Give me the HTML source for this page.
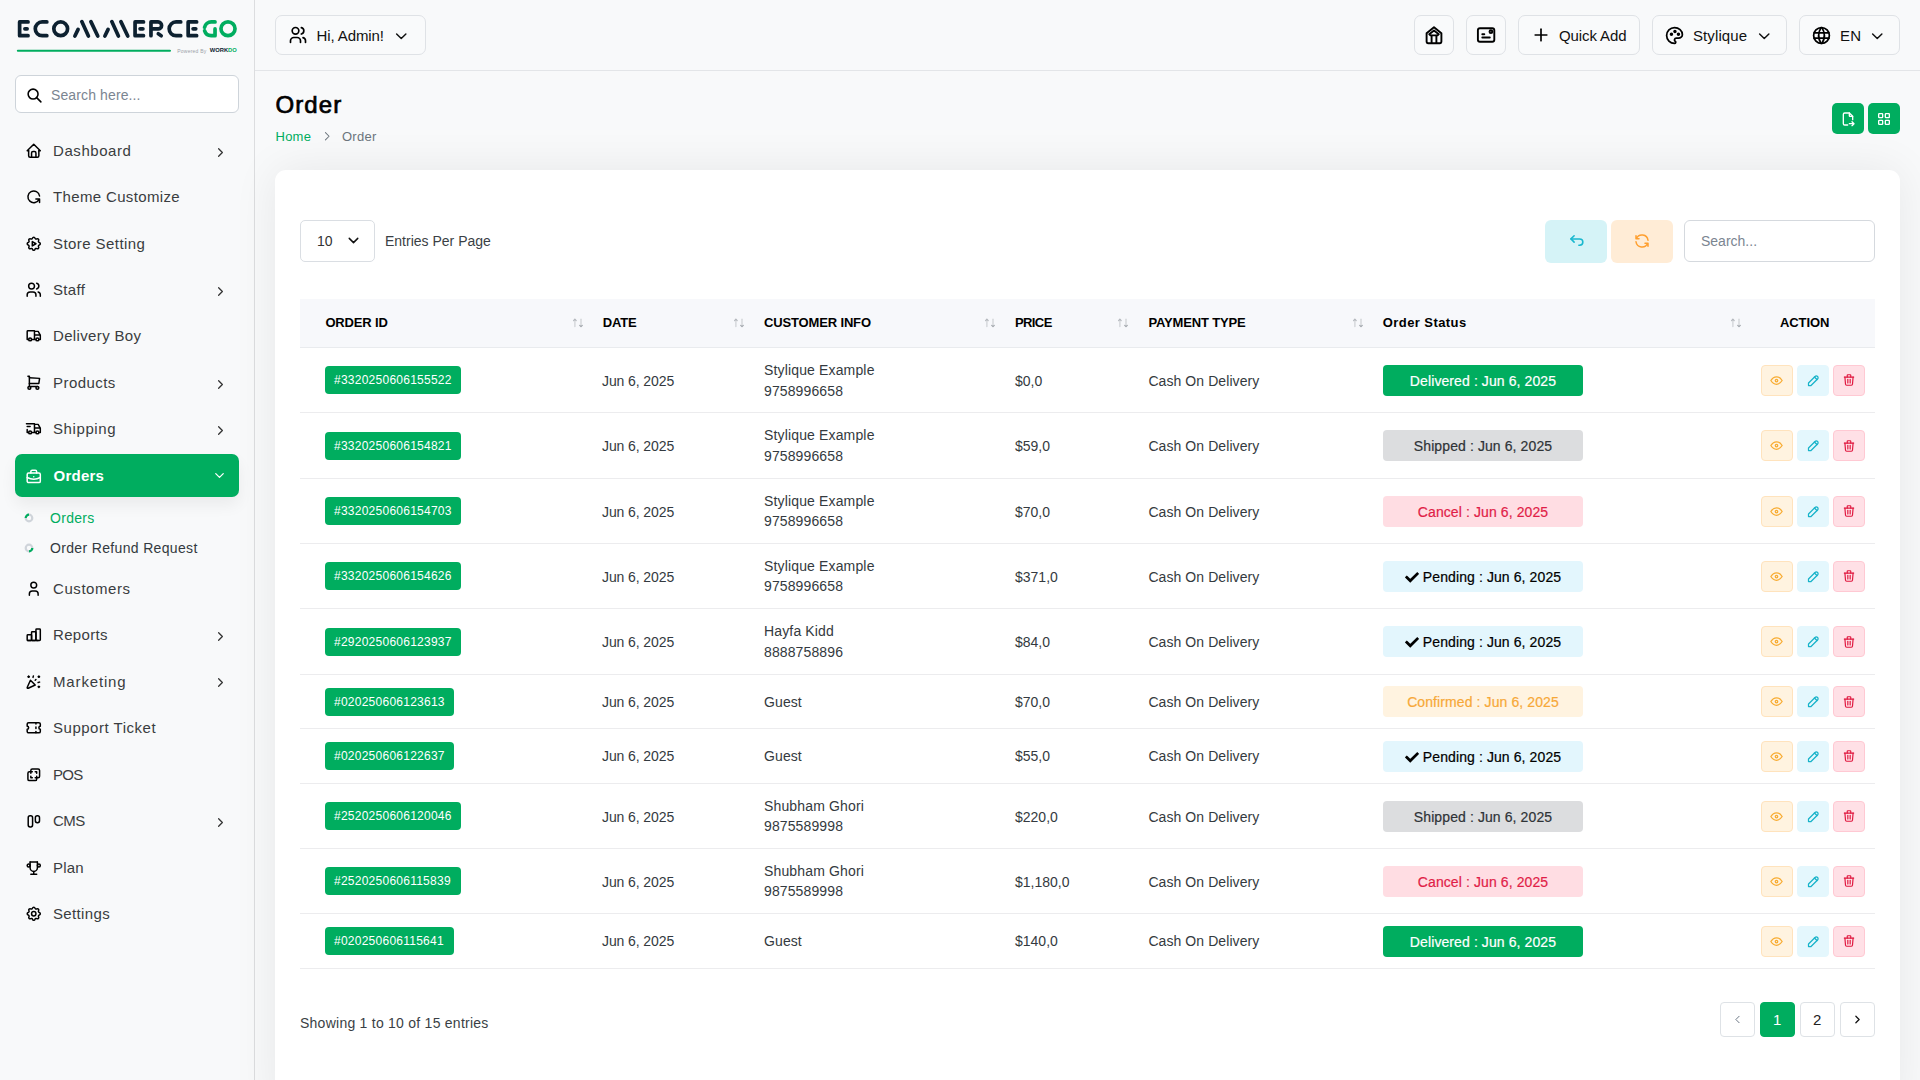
<!DOCTYPE html>
<html lang="en"><head><meta charset="utf-8"><title>Order</title><style>
*{box-sizing:border-box;margin:0;padding:0}
html,body{width:1920px;height:1080px;overflow:hidden}
body{font-family:"Liberation Sans",sans-serif;background:#f8f9fa;position:relative}
#sidebar{position:absolute;left:0;top:0;width:255px;height:1080px;background:#f8f9fa;border-right:1px solid #dcdddf}
.t{position:absolute;white-space:nowrap;line-height:20px;height:20px}
.box{position:absolute}
.ic{position:absolute;overflow:visible}
</style></head>
<body>
<div id="sidebar"></div>
<svg style="position:absolute;left:0;top:0;width:254px;height:60px" viewBox="0 0 254 60"><g stroke="#0d2130" stroke-width="3.7" fill="none" stroke-linecap="round" stroke-linejoin="round"><path d="M28.05 21.93H19.62V35.7H28.05"/><path d="M24.9 28.8H27.1"/><path d="M46.83 21.93H42.15A6.88 6.88 0 0 0 42.15 35.7H46.83"/><circle cx="60.7" cy="28.8" r="6.88"/><path d="M74.9 36L78.1 29.4M81.8 21.6L88.4 36M90.9 21.6L97.75 36"/><path d="M104.9 36L108.1 29.4M111.8 21.6L118.4 36M120.9 21.6L127.75 36"/><path d="M143.5 21.93H135.07V35.7H143.5"/><path d="M140.07 28.8H142.9"/><path d="M150.97 35.7V21.93H158.1A3.48 3.48 0 0 1 158.1 28.9H150.97"/><path d="M158.3 33.8L161.2 35.7"/><path d="M180.73 21.93H176.05A6.88 6.88 0 0 0 176.05 35.7H180.73"/><path d="M196.63 21.93H188.17V35.7H196.63"/><path d="M193.07 28.8H195.73"/></g><g stroke="#00ad5f" stroke-width="3.7" fill="none" stroke-linecap="round" stroke-linejoin="round"><path d="M215.03 21.93H211.35A6.88 6.88 0 0 0 204.55 27.3"/><path d="M204.6 30.8A6.88 6.88 0 0 0 211.35 35.7H215.03V28.9"/><ellipse cx="228" cy="28.8" rx="7.03" ry="6.88"/><path d="M17.9 50.75H169.9" stroke-width="2.2"/></g><text x="177.3" y="52.8" font-size="5" fill="#9ba1a8" font-family="Liberation Sans" textLength="29" lengthAdjust="spacing">Powered By</text><text x="209.8" y="52.2" font-size="5.8" font-weight="700" fill="#0d2130" font-family="Liberation Sans" textLength="27" lengthAdjust="spacingAndGlyphs">WORK<tspan fill="#00ad5f">DO</tspan></text></svg>
<div class="box" style="left:15px;top:75px;width:224px;height:38px;background:#fff;border:1px solid #ced4da;border-radius:6px"></div>
<svg class="ic" style="left:26px;top:87px;width:17px;height:17px;" viewBox="0 0 24 24" fill="none" stroke="#000" stroke-width="2.2" stroke-linecap="round" stroke-linejoin="round"><path d="M10 10m-7 0a7 7 0 1 0 14 0a7 7 0 1 0 -14 0"/><path d="M21 21l-6 -6"/></svg>
<div class="t" style="left:51px;top:84.95px;font-size:14px;font-weight:400;color:#7b8591;letter-spacing:0.12px;">Search here...</div>
<svg class="ic" style="left:25.35px;top:141.8px;width:17.5px;height:17.5px;" viewBox="0 0 24 24" fill="none" stroke="#000" stroke-width="2.05" stroke-linecap="round" stroke-linejoin="round"><path d="M5 12l-2 0l9 -9l9 9l-2 0"/><path d="M5 12v7a2 2 0 0 0 2 2h10a2 2 0 0 0 2 -2v-7"/><path d="M9 21v-6a2 2 0 0 1 2 -2h2a2 2 0 0 1 2 2v6"/></svg>
<div class="t" style="left:53px;top:140.95px;font-size:15px;font-weight:400;color:#3a3d40;letter-spacing:0.57px;">Dashboard</div>
<svg class="ic" style="left:213px;top:144.70000000000002px;width:15px;height:15px;" viewBox="0 0 24 24" fill="none" stroke="#333" stroke-width="2" stroke-linecap="round" stroke-linejoin="round"><path d="M9 6l6 6l-6 6"/></svg>
<svg class="ic" style="left:25.35px;top:188.1px;width:17.5px;height:17.5px;" viewBox="0 0 24 24" fill="none" stroke="#000" stroke-width="2.05" stroke-linecap="round" stroke-linejoin="round"><path d="M19.95 11a8 8 0 1 0 -.5 4m.5 5v-5h-5"/></svg>
<div class="t" style="left:53px;top:187.25px;font-size:15px;font-weight:400;color:#3a3d40;letter-spacing:0.35px;">Theme Customize</div>
<svg class="ic" style="left:25.35px;top:234.5px;width:17.5px;height:17.5px;" viewBox="0 0 24 24" fill="none" stroke="#000" stroke-width="2.05" stroke-linecap="round" stroke-linejoin="round"><path d="M10.325 4.317c.426 -1.756 2.924 -1.756 3.35 0a1.724 1.724 0 0 0 2.573 1.066c1.543 -.94 3.31 .826 2.37 2.37a1.724 1.724 0 0 0 1.065 2.572c1.756 .426 1.756 2.924 0 3.35a1.724 1.724 0 0 0 -1.066 2.573c.94 1.543 -.826 3.31 -2.37 2.37a1.724 1.724 0 0 0 -2.572 1.065c-.426 1.756 -2.924 1.756 -3.35 0a1.724 1.724 0 0 0 -2.573 -1.066c-1.543 .94 -3.31 -.826 -2.37 -2.37a1.724 1.724 0 0 0 -1.065 -2.572c-1.756 -.426 -1.756 -2.924 0 -3.35a1.724 1.724 0 0 0 1.066 -2.573c-.94 -1.543 .826 -3.31 2.37 -2.37c1 .608 2.296 .07 2.572 -1.065z"/><path d="M10 9v6l5 -3z"/></svg>
<div class="t" style="left:53px;top:233.65px;font-size:15px;font-weight:400;color:#3a3d40;letter-spacing:0.43px;">Store Setting</div>
<svg class="ic" style="left:25.35px;top:280.9px;width:17.5px;height:17.5px;" viewBox="0 0 24 24" fill="none" stroke="#000" stroke-width="2.05" stroke-linecap="round" stroke-linejoin="round"><path d="M9 7m-4 0a4 4 0 1 0 8 0a4 4 0 1 0 -8 0"/><path d="M3 21v-2a4 4 0 0 1 4 -4h4a4 4 0 0 1 4 4v2"/><path d="M16 3.13a4 4 0 0 1 0 7.75"/><path d="M21 21v-2a4 4 0 0 0 -3 -3.85"/></svg>
<div class="t" style="left:53px;top:280.05px;font-size:15px;font-weight:400;color:#3a3d40;letter-spacing:0.35px;">Staff</div>
<svg class="ic" style="left:213px;top:283.79999999999995px;width:15px;height:15px;" viewBox="0 0 24 24" fill="none" stroke="#333" stroke-width="2" stroke-linecap="round" stroke-linejoin="round"><path d="M9 6l6 6l-6 6"/></svg>
<svg class="ic" style="left:25.35px;top:327.2px;width:17.5px;height:17.5px;" viewBox="0 0 24 24" fill="none" stroke="#000" stroke-width="2.05" stroke-linecap="round" stroke-linejoin="round"><path d="M7 17m-2 0a2 2 0 1 0 4 0a2 2 0 1 0 -4 0"/><path d="M17 17m-2 0a2 2 0 1 0 4 0a2 2 0 1 0 -4 0"/><path d="M5 17h-2v-11a1 1 0 0 1 1 -1h9v12m-4 0h6m4 0h2v-6h-8m0 -5h5l3 5"/></svg>
<div class="t" style="left:53px;top:326.35px;font-size:15px;font-weight:400;color:#3a3d40;letter-spacing:0.35px;">Delivery Boy</div>
<svg class="ic" style="left:25.35px;top:373.6px;width:17.5px;height:17.5px;" viewBox="0 0 24 24" fill="none" stroke="#000" stroke-width="2.05" stroke-linecap="round" stroke-linejoin="round"><path d="M6 19m-2 0a2 2 0 1 0 4 0a2 2 0 1 0 -4 0"/><path d="M17 19m-2 0a2 2 0 1 0 4 0a2 2 0 1 0 -4 0"/><path d="M17 17h-11v-14h-2"/><path d="M6 5l14 1l-1 7h-13"/></svg>
<div class="t" style="left:53px;top:372.75px;font-size:15px;font-weight:400;color:#3a3d40;letter-spacing:0.45px;">Products</div>
<svg class="ic" style="left:213px;top:376.5px;width:15px;height:15px;" viewBox="0 0 24 24" fill="none" stroke="#333" stroke-width="2" stroke-linecap="round" stroke-linejoin="round"><path d="M9 6l6 6l-6 6"/></svg>
<svg class="ic" style="left:25.35px;top:419.9px;width:17.5px;height:17.5px;" viewBox="0 0 24 24" fill="none" stroke="#000" stroke-width="2.05" stroke-linecap="round" stroke-linejoin="round"><path d="M7 17m-2 0a2 2 0 1 0 4 0a2 2 0 1 0 -4 0"/><path d="M17 17m-2 0a2 2 0 1 0 4 0a2 2 0 1 0 -4 0"/><path d="M5 17h-2v-4m-1 -8h11v12m-4 0h6m4 0h2v-6h-8m0 -5h5l3 5"/><path d="M3 9l4 0"/></svg>
<div class="t" style="left:53px;top:419.05px;font-size:15px;font-weight:400;color:#3a3d40;letter-spacing:0.6px;">Shipping</div>
<svg class="ic" style="left:213px;top:422.79999999999995px;width:15px;height:15px;" viewBox="0 0 24 24" fill="none" stroke="#333" stroke-width="2" stroke-linecap="round" stroke-linejoin="round"><path d="M9 6l6 6l-6 6"/></svg>
<svg class="ic" style="left:25.35px;top:579.8px;width:17.5px;height:17.5px;" viewBox="0 0 24 24" fill="none" stroke="#000" stroke-width="2.05" stroke-linecap="round" stroke-linejoin="round"><path d="M8 7a4 4 0 1 0 8 0a4 4 0 0 0 -8 0"/><path d="M6 21v-2a4 4 0 0 1 4 -4h4a4 4 0 0 1 4 4v2"/></svg>
<div class="t" style="left:53px;top:578.95px;font-size:15px;font-weight:400;color:#3a3d40;letter-spacing:0.57px;">Customers</div>
<svg class="ic" style="left:25.35px;top:626.2px;width:17.5px;height:17.5px;" viewBox="0 0 24 24" fill="none" stroke="#000" stroke-width="2.05" stroke-linecap="round" stroke-linejoin="round"><path d="M3 13a1 1 0 0 1 1 -1h4a1 1 0 0 1 1 1v6a1 1 0 0 1 -1 1h-4a1 1 0 0 1 -1 -1z"/><path d="M9 9a1 1 0 0 1 1 -1h4a1 1 0 0 1 1 1v10a1 1 0 0 1 -1 1h-4a1 1 0 0 1 -1 -1z"/><path d="M15 5a1 1 0 0 1 1 -1h4a1 1 0 0 1 1 1v14a1 1 0 0 1 -1 1h-4a1 1 0 0 1 -1 -1z"/><path d="M4 20h14"/></svg>
<div class="t" style="left:53px;top:625.35px;font-size:15px;font-weight:400;color:#3a3d40;letter-spacing:0.35px;">Reports</div>
<svg class="ic" style="left:213px;top:629.1px;width:15px;height:15px;" viewBox="0 0 24 24" fill="none" stroke="#333" stroke-width="2" stroke-linecap="round" stroke-linejoin="round"><path d="M9 6l6 6l-6 6"/></svg>
<svg class="ic" style="left:25.35px;top:672.5px;width:17.5px;height:17.5px;" viewBox="0 0 24 24" fill="none" stroke="#000" stroke-width="2.05" stroke-linecap="round" stroke-linejoin="round"><path d="M4 5h2"/><path d="M5 4v2"/><path d="M11.5 4l-.5 2"/><path d="M18 5h2"/><path d="M19 4v2"/><path d="M15 9l-1 1"/><path d="M18 13l2 -.5"/><path d="M18 19h2"/><path d="M19 18v2"/><path d="M14 16.518l-6.518 -6.518l-4.39 9.58a1 1 0 0 0 1.329 1.329l9.579 -4.39z"/></svg>
<div class="t" style="left:53px;top:671.65px;font-size:15px;font-weight:400;color:#3a3d40;letter-spacing:0.85px;">Marketing</div>
<svg class="ic" style="left:213px;top:675.4px;width:15px;height:15px;" viewBox="0 0 24 24" fill="none" stroke="#333" stroke-width="2" stroke-linecap="round" stroke-linejoin="round"><path d="M9 6l6 6l-6 6"/></svg>
<svg class="ic" style="left:25.35px;top:719.0px;width:17.5px;height:17.5px;" viewBox="0 0 24 24" fill="none" stroke="#000" stroke-width="2.05" stroke-linecap="round" stroke-linejoin="round"><path d="M15 5l0 2"/><path d="M15 11l0 2"/><path d="M15 17l0 2"/><path d="M5 5h14a2 2 0 0 1 2 2v3a2 2 0 0 0 0 4v3a2 2 0 0 1 -2 2h-14a2 2 0 0 1 -2 -2v-3a2 2 0 0 0 0 -4v-3a2 2 0 0 1 2 -2"/></svg>
<div class="t" style="left:53px;top:718.15px;font-size:15px;font-weight:400;color:#3a3d40;letter-spacing:0.52px;">Support Ticket</div>
<svg class="ic" style="left:25.35px;top:765.8px;width:17.5px;height:17.5px;" viewBox="0 0 24 24" fill="none" stroke="#000" stroke-width="2.05" stroke-linecap="round" stroke-linejoin="round"><path d="M16 16v2a2 2 0 0 1 -2 2h-8a2 2 0 0 1 -2 -2v-8a2 2 0 0 1 2 -2h2v-2a2 2 0 0 1 2 -2h8a2 2 0 0 1 2 2v8a2 2 0 0 1 -2 2h-2"/><path d="M10 8l-2 0l0 2"/><path d="M8 14l0 2l2 0"/><path d="M14 8l2 0l0 2"/><path d="M16 14l0 2l-2 0"/></svg>
<div class="t" style="left:53px;top:764.95px;font-size:15px;font-weight:400;color:#3a3d40;letter-spacing:-0.75px;">POS</div>
<svg class="ic" style="left:25.35px;top:812.1px;width:17.5px;height:17.5px;" viewBox="0 0 24 24" fill="none" stroke="#000" stroke-width="2.05" stroke-linecap="round" stroke-linejoin="round"><rect x="4.4" y="5.2" width="6" height="15.3" rx="2.6"/><rect x="14.2" y="5.2" width="5.7" height="9.4" rx="2.6"/></svg>
<div class="t" style="left:53px;top:811.25px;font-size:15px;font-weight:400;color:#3a3d40;letter-spacing:-0.55px;">CMS</div>
<svg class="ic" style="left:213px;top:815.0px;width:15px;height:15px;" viewBox="0 0 24 24" fill="none" stroke="#333" stroke-width="2" stroke-linecap="round" stroke-linejoin="round"><path d="M9 6l6 6l-6 6"/></svg>
<svg class="ic" style="left:25.35px;top:858.6px;width:17.5px;height:17.5px;" viewBox="0 0 24 24" fill="none" stroke="#000" stroke-width="2.05" stroke-linecap="round" stroke-linejoin="round"><path d="M8 21l8 0"/><path d="M12 17l0 4"/><path d="M7 4l10 0"/><path d="M17 4v8a5 5 0 0 1 -10 0v-8"/><path d="M5 9m-2 0a2 2 0 1 0 4 0a2 2 0 1 0 -4 0"/><path d="M19 9m-2 0a2 2 0 1 0 4 0a2 2 0 1 0 -4 0"/></svg>
<div class="t" style="left:53px;top:857.75px;font-size:15px;font-weight:400;color:#3a3d40;letter-spacing:0.15px;">Plan</div>
<svg class="ic" style="left:25.35px;top:904.8px;width:17.5px;height:17.5px;" viewBox="0 0 24 24" fill="none" stroke="#000" stroke-width="2.05" stroke-linecap="round" stroke-linejoin="round"><path d="M10.325 4.317c.426 -1.756 2.924 -1.756 3.35 0a1.724 1.724 0 0 0 2.573 1.066c1.543 -.94 3.31 .826 2.37 2.37a1.724 1.724 0 0 0 1.065 2.572c1.756 .426 1.756 2.924 0 3.35a1.724 1.724 0 0 0 -1.066 2.573c.94 1.543 -.826 3.31 -2.37 2.37a1.724 1.724 0 0 0 -2.572 1.065c-.426 1.756 -2.924 1.756 -3.35 0a1.724 1.724 0 0 0 -2.573 -1.066c-1.543 .94 -3.31 -.826 -2.37 -2.37a1.724 1.724 0 0 0 -1.065 -2.572c-1.756 -.426 -1.756 -2.924 0 -3.35a1.724 1.724 0 0 0 1.066 -2.573c-.94 -1.543 .826 -3.31 2.37 -2.37c1 .608 2.296 .07 2.572 -1.065z"/><path d="M9 12a3 3 0 1 0 6 0a3 3 0 0 0 -6 0"/></svg>
<div class="t" style="left:53px;top:903.95px;font-size:15px;font-weight:400;color:#3a3d40;letter-spacing:0.35px;">Settings</div>
<div class="box" style="left:15px;top:454px;width:224px;height:43px;background:#00ad5f;border-radius:7px;box-shadow:0 8px 16px rgba(0,0,0,0.06)"></div>
<svg class="ic" style="left:25.3px;top:468px;width:17.5px;height:17.5px;" viewBox="0 0 24 24" fill="none" stroke="#fff" stroke-width="2.05" stroke-linecap="round" stroke-linejoin="round"><path d="M3 7m0 2a2 2 0 0 1 2 -2h14a2 2 0 0 1 2 2v9a2 2 0 0 1 -2 2h-14a2 2 0 0 1 -2 -2z"/><path d="M8 7v-2a2 2 0 0 1 2 -2h4a2 2 0 0 1 2 2v2"/><path d="M12 12l0 .01"/><path d="M3 13a20 20 0 0 0 18 0"/></svg>
<div class="t" style="left:53.5px;top:466.15px;font-size:15px;font-weight:700;color:#fff;letter-spacing:0.25px;">Orders</div>
<svg class="ic" style="left:211.5px;top:467.5px;width:15px;height:15px;" viewBox="0 0 24 24" fill="none" stroke="#fff" stroke-width="2" stroke-linecap="round" stroke-linejoin="round"><path d="M6 9l6 6l6 -6"/></svg>
<svg class="ic" style="left:24px;top:513px;width:10px;height:10px" viewBox="0 0 10 10"><circle cx="5" cy="5" r="3.3" fill="none" stroke="#cfd4da" stroke-width="2.2"/><path d="M1.7 5A3.3 3.3 0 0 1 5 1.7" fill="none" stroke="#00ad5f" stroke-width="2.2"/></svg>
<div class="t" style="left:50px;top:508.05px;font-size:14px;font-weight:400;color:#00ad5f;letter-spacing:0.3px;">Orders</div>
<svg class="ic" style="left:24px;top:543px;width:10px;height:10px" viewBox="0 0 10 10"><circle cx="5" cy="5" r="3.3" fill="none" stroke="#cfd4da" stroke-width="2.2"/><path d="M8.3 5A3.3 3.3 0 0 1 5 8.3" fill="none" stroke="#00ad5f" stroke-width="2.2"/></svg>
<div class="t" style="left:50px;top:538.05px;font-size:14px;font-weight:400;color:#333a40;letter-spacing:0.34px;">Order Refund Request</div>
<div class="box" style="left:255px;top:70px;width:1665px;height:1px;background:#e3e5e8"></div>
<div class="box" style="left:275px;top:15px;width:151px;height:40px;border:1px solid #dfe2e6;border-radius:7px;background:#f9fafb"></div>
<svg class="ic" style="left:287.5px;top:25px;width:20px;height:20px;" viewBox="0 0 24 24" fill="none" stroke="#000" stroke-width="2" stroke-linecap="round" stroke-linejoin="round"><path d="M9 7m-4 0a4 4 0 1 0 8 0a4 4 0 1 0 -8 0"/><path d="M3 21v-2a4 4 0 0 1 4 -4h4a4 4 0 0 1 4 4v2"/><path d="M16 3.13a4 4 0 0 1 0 7.75"/><path d="M21 21v-2a4 4 0 0 0 -3 -3.85"/></svg>
<div class="t" style="left:316.5px;top:25.95px;font-size:15px;font-weight:400;color:#111;letter-spacing:-0.1px;">Hi, Admin!</div>
<svg class="ic" style="left:392px;top:26.5px;width:18.5px;height:18.5px;" viewBox="0 0 24 24" fill="none" stroke="#111" stroke-width="1.9" stroke-linecap="round" stroke-linejoin="round"><path d="M6 9l6 6l6 -6"/></svg>
<div class="box" style="left:1414px;top:15px;width:40px;height:40px;border:1px solid #dfe2e6;border-radius:7px;background:#f9fafb"></div>
<svg class="ic" style="left:1414px;top:15px;width:40px;height:40px" viewBox="0 0 40 40" fill="none" stroke="#000" stroke-width="1.9" stroke-linecap="round" stroke-linejoin="round"><path d="M12.6 18.2L20 12.2L27.4 18.2V26.6A1.6 1.6 0 0 1 25.8 28.2H14.2A1.6 1.6 0 0 1 12.6 26.6Z"/><path d="M15.2 19.2L20 15.4L24.8 19.2L23.6 20.4H16.4Z"/><path d="M17.6 20.6V28M22.4 20.6V28"/></svg>
<div class="box" style="left:1466px;top:15px;width:40px;height:40px;border:1px solid #dfe2e6;border-radius:7px;background:#f9fafb"></div>
<svg class="ic" style="left:1466px;top:15px;width:40px;height:40px" viewBox="0 0 40 40" fill="none" stroke="#000" stroke-width="1.9" stroke-linecap="round" stroke-linejoin="round"><rect x="11.9" y="13.3" width="16.4" height="13.5" rx="2"/><circle cx="24.9" cy="16.7" r="1.4"/><path d="M16.3 19.2H18.3M16.3 22.5H23.8"/></svg>
<div class="box" style="left:1518px;top:15px;width:122px;height:40px;border:1px solid #dfe2e6;border-radius:7px;background:#f9fafb"></div>
<svg class="ic" style="left:1531px;top:25px;width:20px;height:20px;" viewBox="0 0 24 24" fill="none" stroke="#000" stroke-width="2" stroke-linecap="round" stroke-linejoin="round"><path d="M12 5l0 14"/><path d="M5 12l14 0"/></svg>
<div class="t" style="left:1559px;top:25.95px;font-size:15px;font-weight:400;color:#111;letter-spacing:-0.1px;">Quick Add</div>
<div class="box" style="left:1652px;top:15px;width:135px;height:40px;border:1px solid #dfe2e6;border-radius:7px;background:#f9fafb"></div>
<svg class="ic" style="left:1664px;top:25px;width:21px;height:21px;" viewBox="0 0 24 24" fill="none" stroke="#000" stroke-width="2" stroke-linecap="round" stroke-linejoin="round"><path d="M12 21a9 9 0 0 1 0 -18c4.97 0 9 3.582 9 8c0 1.06 -.474 2.078 -1.318 2.828c-.844 .75 -1.989 1.172 -3.182 1.172h-2.5a2 2 0 0 0 -1 3.75a1.3 1.3 0 0 1 -1 2.25"/><path d="M8.5 10.5m-1 0a1 1 0 1 0 2 0a1 1 0 1 0 -2 0"/><path d="M12.5 7.5m-1 0a1 1 0 1 0 2 0a1 1 0 1 0 -2 0"/><path d="M16.5 10.5m-1 0a1 1 0 1 0 2 0a1 1 0 1 0 -2 0"/></svg>
<div class="t" style="left:1693px;top:25.95px;font-size:15px;font-weight:400;color:#111;letter-spacing:0.1px;">Stylique</div>
<svg class="ic" style="left:1755px;top:26.5px;width:18.5px;height:18.5px;" viewBox="0 0 24 24" fill="none" stroke="#111" stroke-width="1.9" stroke-linecap="round" stroke-linejoin="round"><path d="M6 9l6 6l6 -6"/></svg>
<div class="box" style="left:1799px;top:15px;width:101px;height:40px;border:1px solid #dfe2e6;border-radius:7px;background:#f9fafb"></div>
<svg class="ic" style="left:1811px;top:25px;width:21px;height:21px;" viewBox="0 0 24 24" fill="none" stroke="#000" stroke-width="2" stroke-linecap="round" stroke-linejoin="round"><path d="M3 12a9 9 0 1 0 18 0a9 9 0 0 0 -18 0"/><path d="M3.6 9h16.8"/><path d="M3.6 15h16.8"/><path d="M11.5 3a17 17 0 0 0 0 18"/><path d="M12.5 3a17 17 0 0 1 0 18"/></svg>
<div class="t" style="left:1840px;top:25.95px;font-size:15px;font-weight:400;color:#111;letter-spacing:0.2px;">EN</div>
<svg class="ic" style="left:1868px;top:26.5px;width:18.5px;height:18.5px;" viewBox="0 0 24 24" fill="none" stroke="#111" stroke-width="1.9" stroke-linecap="round" stroke-linejoin="round"><path d="M6 9l6 6l6 -6"/></svg>
<div class="t" style="left:275.5px;top:95.35px;font-size:24px;font-weight:400;color:#000;letter-spacing:1.1px;-webkit-text-stroke:0.7px #000">Order</div>
<div class="t" style="left:275.5px;top:126.65px;font-size:13px;font-weight:400;color:#00ad5f;letter-spacing:0.25px;">Home</div>
<svg class="ic" style="left:319.5px;top:129px;width:14.5px;height:14.5px;" viewBox="0 0 24 24" fill="none" stroke="#6c757d" stroke-width="1.7" stroke-linecap="round" stroke-linejoin="round"><path d="M9 6l6 6l-6 6"/></svg>
<div class="t" style="left:342px;top:126.65px;font-size:13px;font-weight:400;color:#6c757d;letter-spacing:0.25px;">Order</div>
<div class="box" style="left:1832px;top:103px;width:32px;height:31px;background:#00ad5f;border-radius:5px"></div>
<svg class="ic" style="left:1840px;top:110.5px;width:16px;height:16px;" viewBox="0 0 24 24" fill="none" stroke="#fff" stroke-width="2" stroke-linecap="round" stroke-linejoin="round"><path d="M14 3v4a1 1 0 0 0 1 1h4"/><path d="M11.5 21h-4.5a2 2 0 0 1 -2 -2v-14a2 2 0 0 1 2 -2h7l5 5v5m-5 6h7m-3 -3l3 3l-3 3"/></svg>
<div class="box" style="left:1868px;top:103px;width:32px;height:31px;background:#00ad5f;border-radius:5px"></div>
<svg class="ic" style="left:1876px;top:110.5px;width:16px;height:16px;" viewBox="0 0 24 24" fill="none" stroke="#fff" stroke-width="2" stroke-linecap="round" stroke-linejoin="round"><path d="M4 4m0 1a1 1 0 0 1 1 -1h4a1 1 0 0 1 1 1v4a1 1 0 0 1 -1 1h-4a1 1 0 0 1 -1 -1z"/><path d="M14 4m0 1a1 1 0 0 1 1 -1h4a1 1 0 0 1 1 1v4a1 1 0 0 1 -1 1h-4a1 1 0 0 1 -1 -1z"/><path d="M4 14m0 1a1 1 0 0 1 1 -1h4a1 1 0 0 1 1 1v4a1 1 0 0 1 -1 1h-4a1 1 0 0 1 -1 -1z"/><path d="M14 14m0 1a1 1 0 0 1 1 -1h4a1 1 0 0 1 1 1v4a1 1 0 0 1 -1 1h-4a1 1 0 0 1 -1 -1z"/></svg>
<div class="box" style="left:275px;top:170px;width:1625px;height:940px;background:#fff;border-radius:11px;box-shadow:0 0 45px rgba(0,0,0,0.075)"></div>
<div class="box" style="left:300px;top:220px;width:75px;height:42px;border:1px solid #dadee3;border-radius:5px;background:#fff"></div>
<div class="t" style="left:317px;top:231.15px;font-size:14px;font-weight:400;color:#333;letter-spacing:0px;">10</div>
<svg class="ic" style="left:344.5px;top:232px;width:17px;height:17px;" viewBox="0 0 24 24" fill="none" stroke="#111" stroke-width="2.1" stroke-linecap="round" stroke-linejoin="round"><path d="M6 9l6 6l6 -6"/></svg>
<div class="t" style="left:385px;top:231.15px;font-size:14px;font-weight:400;color:#3a3f45;letter-spacing:0px;">Entries Per Page</div>
<div class="box" style="left:1545px;top:220px;width:62px;height:43px;background:#d5f3f7;border-radius:6px"></div>
<svg class="ic" style="left:1567px;top:231px;width:19px;height:19px;" viewBox="0 0 24 24" fill="none" stroke="#1ab8cf" stroke-width="2" stroke-linecap="round" stroke-linejoin="round"><path d="M9 14l-4 -4l4 -4"/><path d="M5 10h11a4 4 0 1 1 0 8h-1"/></svg>
<div class="box" style="left:1611px;top:220px;width:62px;height:43px;background:#ffecd6;border-radius:6px"></div>
<svg class="ic" style="left:1633px;top:231.5px;width:18px;height:18px;" viewBox="0 0 24 24" fill="none" stroke="#ff9f2f" stroke-width="2" stroke-linecap="round" stroke-linejoin="round"><path d="M20 11a8.1 8.1 0 0 0 -15.5 -2m-.5 -4v4h4"/><path d="M4 13a8.1 8.1 0 0 0 15.5 2m.5 4v-4h-4"/></svg>
<div class="box" style="left:1684px;top:220px;width:191px;height:42px;border:1px solid #d5d9de;border-radius:6px;background:#fff"></div>
<div class="t" style="left:1701px;top:231.15px;font-size:14px;font-weight:400;color:#7b8591;letter-spacing:0px;">Search...</div>
<div class="box" style="left:300px;top:299px;width:1575px;height:49px;background:#f7f8fb;border-bottom:1px solid #e9ebee"></div>
<div class="t" style="left:325.4px;top:312.65px;font-size:13px;font-weight:700;color:#000;letter-spacing:-0.15px;">ORDER ID</div>
<svg class="ic" style="left:571.5px;top:316px;width:12px;height:12px" viewBox="0 0 12 12" fill="none" stroke-width="1.2" stroke-linecap="round" stroke-linejoin="round"><path d="M2.9 10.6V3.4" stroke="#cdd0d4"/><path d="M1.6 4.6L2.9 3.2L4.2 4.6" stroke="#b4b8bd"/><path d="M9 3.2V10.4" stroke="#cdd0d4"/><path d="M7.7 9.3L9 10.6L10.3 9.3" stroke="#a4a8ae"/></svg>
<div class="t" style="left:602.7px;top:312.65px;font-size:13px;font-weight:700;color:#000;letter-spacing:-0.15px;">DATE</div>
<svg class="ic" style="left:733px;top:316px;width:12px;height:12px" viewBox="0 0 12 12" fill="none" stroke-width="1.2" stroke-linecap="round" stroke-linejoin="round"><path d="M2.9 10.6V3.4" stroke="#cdd0d4"/><path d="M1.6 4.6L2.9 3.2L4.2 4.6" stroke="#b4b8bd"/><path d="M9 3.2V10.4" stroke="#cdd0d4"/><path d="M7.7 9.3L9 10.6L10.3 9.3" stroke="#a4a8ae"/></svg>
<div class="t" style="left:764px;top:312.65px;font-size:13px;font-weight:700;color:#000;letter-spacing:-0.15px;">CUSTOMER INFO</div>
<svg class="ic" style="left:983.5px;top:316px;width:12px;height:12px" viewBox="0 0 12 12" fill="none" stroke-width="1.2" stroke-linecap="round" stroke-linejoin="round"><path d="M2.9 10.6V3.4" stroke="#cdd0d4"/><path d="M1.6 4.6L2.9 3.2L4.2 4.6" stroke="#b4b8bd"/><path d="M9 3.2V10.4" stroke="#cdd0d4"/><path d="M7.7 9.3L9 10.6L10.3 9.3" stroke="#a4a8ae"/></svg>
<div class="t" style="left:1015px;top:312.65px;font-size:13px;font-weight:700;color:#000;letter-spacing:-0.6px;">PRICE</div>
<svg class="ic" style="left:1117.2px;top:316px;width:12px;height:12px" viewBox="0 0 12 12" fill="none" stroke-width="1.2" stroke-linecap="round" stroke-linejoin="round"><path d="M2.9 10.6V3.4" stroke="#cdd0d4"/><path d="M1.6 4.6L2.9 3.2L4.2 4.6" stroke="#b4b8bd"/><path d="M9 3.2V10.4" stroke="#cdd0d4"/><path d="M7.7 9.3L9 10.6L10.3 9.3" stroke="#a4a8ae"/></svg>
<div class="t" style="left:1148.4px;top:312.65px;font-size:13px;font-weight:700;color:#000;letter-spacing:-0.15px;">PAYMENT TYPE</div>
<svg class="ic" style="left:1351.8px;top:316px;width:12px;height:12px" viewBox="0 0 12 12" fill="none" stroke-width="1.2" stroke-linecap="round" stroke-linejoin="round"><path d="M2.9 10.6V3.4" stroke="#cdd0d4"/><path d="M1.6 4.6L2.9 3.2L4.2 4.6" stroke="#b4b8bd"/><path d="M9 3.2V10.4" stroke="#cdd0d4"/><path d="M7.7 9.3L9 10.6L10.3 9.3" stroke="#a4a8ae"/></svg>
<div class="t" style="left:1382.8px;top:312.65px;font-size:13px;font-weight:700;color:#000;letter-spacing:0.42px;">Order Status</div>
<svg class="ic" style="left:1729.8px;top:316px;width:12px;height:12px" viewBox="0 0 12 12" fill="none" stroke-width="1.2" stroke-linecap="round" stroke-linejoin="round"><path d="M2.9 10.6V3.4" stroke="#cdd0d4"/><path d="M1.6 4.6L2.9 3.2L4.2 4.6" stroke="#b4b8bd"/><path d="M9 3.2V10.4" stroke="#cdd0d4"/><path d="M7.7 9.3L9 10.6L10.3 9.3" stroke="#a4a8ae"/></svg>
<div class="t" style="left:1780px;top:312.65px;font-size:13px;font-weight:700;color:#000;letter-spacing:-0.1px;">ACTION</div>
<div class="box" style="left:300px;top:412.00px;width:1575px;height:1px;background:#ececee"></div>
<div class="box" style="left:325px;top:366.25px;width:136px;height:28px;background:#00ad5f;border-radius:4px"></div>
<div class="t" style="left:334px;top:370.40px;font-size:12px;font-weight:400;color:#fff;letter-spacing:0.25px;">#3320250606155522</div>
<div class="t" style="left:602px;top:371.10px;font-size:14px;font-weight:400;color:#343a40;letter-spacing:-0.1px;">Jun 6, 2025</div>
<div class="t" style="left:764px;top:359.80px;font-size:14px;font-weight:400;color:#343a40;letter-spacing:0.15px;">Stylique Example</div>
<div class="t" style="left:764px;top:380.60px;font-size:14px;font-weight:400;color:#343a40;letter-spacing:0.12px;">9758996658</div>
<div class="t" style="left:1015px;top:371.10px;font-size:14px;font-weight:400;color:#343a40;letter-spacing:0px;">$0,0</div>
<div class="t" style="left:1148.4px;top:371.10px;font-size:14px;font-weight:400;color:#343a40;letter-spacing:0.08px;">Cash On Delivery</div>
<div class="box" style="left:1383px;top:364.75px;width:200px;height:31px;background:#00ad5f;border-radius:4px;color:#fff;font-size:14px;line-height:32.5px;text-align:center;font-weight:400;letter-spacing:0.1px;-webkit-text-stroke:0.2px #fff">Delivered : Jun 6, 2025</div>
<div class="box" style="left:1761px;top:364.75px;width:32px;height:31px;background:#fff3e0;border:1px solid #ffe3bd;border-radius:4px"></div>
<svg class="ic" style="left:1768.5px;top:372.75px;width:15px;height:15px;" viewBox="0 0 24 24" fill="none" stroke="#f8ac32" stroke-width="2" stroke-linecap="round" stroke-linejoin="round"><path d="M10 12a2 2 0 1 0 4 0a2 2 0 0 0 -4 0"/><path d="M21 12c-2.4 4 -5.4 6 -9 6c-3.6 0 -6.6 -2 -9 -6c2.4 -4 5.4 -6 9 -6c3.6 0 6.6 2 9 6"/></svg>
<div class="box" style="left:1797px;top:364.75px;width:32px;height:31px;background:#e4f7fd;border:1px solid #e4f7fd;border-radius:4px"></div>
<svg class="ic" style="left:1805.5px;top:372.75px;width:15px;height:15px;" viewBox="0 0 24 24" fill="none" stroke="#17b3c9" stroke-width="2" stroke-linecap="round" stroke-linejoin="round"><path d="M4 20h4l10.5 -10.5a2.828 2.828 0 1 0 -4 -4l-10.5 10.5v4"/><path d="M13.5 6.5l4 4"/></svg>
<div class="box" style="left:1833px;top:364.75px;width:32px;height:31px;background:#ffe0e6;border:1px solid #ffc9d3;border-radius:4px"></div>
<svg class="ic" style="left:1842.0px;top:373.25px;width:14px;height:14px;" viewBox="0 0 24 24" fill="none" stroke="#e0173f" stroke-width="2" stroke-linecap="round" stroke-linejoin="round"><path d="M4 7l16 0"/><path d="M10 11l0 6"/><path d="M14 11l0 6"/><path d="M5 7l1 12a2 2 0 0 0 2 2h8a2 2 0 0 0 2 -2l1 -12"/><path d="M9 7v-3a1 1 0 0 1 1 -1h4a1 1 0 0 1 1 1v3"/></svg>
<div class="box" style="left:300px;top:477.75px;width:1575px;height:1px;background:#ececee"></div>
<div class="box" style="left:325px;top:431.62px;width:136px;height:28px;background:#00ad5f;border-radius:4px"></div>
<div class="t" style="left:334px;top:435.77px;font-size:12px;font-weight:400;color:#fff;letter-spacing:0.25px;">#3320250606154821</div>
<div class="t" style="left:602px;top:436.47px;font-size:14px;font-weight:400;color:#343a40;letter-spacing:-0.1px;">Jun 6, 2025</div>
<div class="t" style="left:764px;top:425.17px;font-size:14px;font-weight:400;color:#343a40;letter-spacing:0.15px;">Stylique Example</div>
<div class="t" style="left:764px;top:445.97px;font-size:14px;font-weight:400;color:#343a40;letter-spacing:0.12px;">9758996658</div>
<div class="t" style="left:1015px;top:436.47px;font-size:14px;font-weight:400;color:#343a40;letter-spacing:0px;">$59,0</div>
<div class="t" style="left:1148.4px;top:436.47px;font-size:14px;font-weight:400;color:#343a40;letter-spacing:0.08px;">Cash On Delivery</div>
<div class="box" style="left:1383px;top:430.12px;width:200px;height:31px;background:#dcdddf;border-radius:4px;color:#2f3337;font-size:14px;line-height:32.5px;text-align:center;font-weight:400;letter-spacing:0.1px;-webkit-text-stroke:0.2px #2f3337">Shipped : Jun 6, 2025</div>
<div class="box" style="left:1761px;top:430.12px;width:32px;height:31px;background:#fff3e0;border:1px solid #ffe3bd;border-radius:4px"></div>
<svg class="ic" style="left:1768.5px;top:438.125px;width:15px;height:15px;" viewBox="0 0 24 24" fill="none" stroke="#f8ac32" stroke-width="2" stroke-linecap="round" stroke-linejoin="round"><path d="M10 12a2 2 0 1 0 4 0a2 2 0 0 0 -4 0"/><path d="M21 12c-2.4 4 -5.4 6 -9 6c-3.6 0 -6.6 -2 -9 -6c2.4 -4 5.4 -6 9 -6c3.6 0 6.6 2 9 6"/></svg>
<div class="box" style="left:1797px;top:430.12px;width:32px;height:31px;background:#e4f7fd;border:1px solid #e4f7fd;border-radius:4px"></div>
<svg class="ic" style="left:1805.5px;top:438.125px;width:15px;height:15px;" viewBox="0 0 24 24" fill="none" stroke="#17b3c9" stroke-width="2" stroke-linecap="round" stroke-linejoin="round"><path d="M4 20h4l10.5 -10.5a2.828 2.828 0 1 0 -4 -4l-10.5 10.5v4"/><path d="M13.5 6.5l4 4"/></svg>
<div class="box" style="left:1833px;top:430.12px;width:32px;height:31px;background:#ffe0e6;border:1px solid #ffc9d3;border-radius:4px"></div>
<svg class="ic" style="left:1842.0px;top:438.625px;width:14px;height:14px;" viewBox="0 0 24 24" fill="none" stroke="#e0173f" stroke-width="2" stroke-linecap="round" stroke-linejoin="round"><path d="M4 7l16 0"/><path d="M10 11l0 6"/><path d="M14 11l0 6"/><path d="M5 7l1 12a2 2 0 0 0 2 2h8a2 2 0 0 0 2 -2l1 -12"/><path d="M9 7v-3a1 1 0 0 1 1 -1h4a1 1 0 0 1 1 1v3"/></svg>
<div class="box" style="left:300px;top:542.75px;width:1575px;height:1px;background:#ececee"></div>
<div class="box" style="left:325px;top:497.00px;width:136px;height:28px;background:#00ad5f;border-radius:4px"></div>
<div class="t" style="left:334px;top:501.15px;font-size:12px;font-weight:400;color:#fff;letter-spacing:0.25px;">#3320250606154703</div>
<div class="t" style="left:602px;top:501.85px;font-size:14px;font-weight:400;color:#343a40;letter-spacing:-0.1px;">Jun 6, 2025</div>
<div class="t" style="left:764px;top:490.55px;font-size:14px;font-weight:400;color:#343a40;letter-spacing:0.15px;">Stylique Example</div>
<div class="t" style="left:764px;top:511.35px;font-size:14px;font-weight:400;color:#343a40;letter-spacing:0.12px;">9758996658</div>
<div class="t" style="left:1015px;top:501.85px;font-size:14px;font-weight:400;color:#343a40;letter-spacing:0px;">$70,0</div>
<div class="t" style="left:1148.4px;top:501.85px;font-size:14px;font-weight:400;color:#343a40;letter-spacing:0.08px;">Cash On Delivery</div>
<div class="box" style="left:1383px;top:495.50px;width:200px;height:31px;background:#ffdde3;border-radius:4px;color:#e11d48;font-size:14px;line-height:32.5px;text-align:center;font-weight:400;letter-spacing:0.1px;-webkit-text-stroke:0.2px #e11d48">Cancel : Jun 6, 2025</div>
<div class="box" style="left:1761px;top:495.50px;width:32px;height:31px;background:#fff3e0;border:1px solid #ffe3bd;border-radius:4px"></div>
<svg class="ic" style="left:1768.5px;top:503.5px;width:15px;height:15px;" viewBox="0 0 24 24" fill="none" stroke="#f8ac32" stroke-width="2" stroke-linecap="round" stroke-linejoin="round"><path d="M10 12a2 2 0 1 0 4 0a2 2 0 0 0 -4 0"/><path d="M21 12c-2.4 4 -5.4 6 -9 6c-3.6 0 -6.6 -2 -9 -6c2.4 -4 5.4 -6 9 -6c3.6 0 6.6 2 9 6"/></svg>
<div class="box" style="left:1797px;top:495.50px;width:32px;height:31px;background:#e4f7fd;border:1px solid #e4f7fd;border-radius:4px"></div>
<svg class="ic" style="left:1805.5px;top:503.5px;width:15px;height:15px;" viewBox="0 0 24 24" fill="none" stroke="#17b3c9" stroke-width="2" stroke-linecap="round" stroke-linejoin="round"><path d="M4 20h4l10.5 -10.5a2.828 2.828 0 1 0 -4 -4l-10.5 10.5v4"/><path d="M13.5 6.5l4 4"/></svg>
<div class="box" style="left:1833px;top:495.50px;width:32px;height:31px;background:#ffe0e6;border:1px solid #ffc9d3;border-radius:4px"></div>
<svg class="ic" style="left:1842.0px;top:504.0px;width:14px;height:14px;" viewBox="0 0 24 24" fill="none" stroke="#e0173f" stroke-width="2" stroke-linecap="round" stroke-linejoin="round"><path d="M4 7l16 0"/><path d="M10 11l0 6"/><path d="M14 11l0 6"/><path d="M5 7l1 12a2 2 0 0 0 2 2h8a2 2 0 0 0 2 -2l1 -12"/><path d="M9 7v-3a1 1 0 0 1 1 -1h4a1 1 0 0 1 1 1v3"/></svg>
<div class="box" style="left:300px;top:607.75px;width:1575px;height:1px;background:#ececee"></div>
<div class="box" style="left:325px;top:562.00px;width:136px;height:28px;background:#00ad5f;border-radius:4px"></div>
<div class="t" style="left:334px;top:566.15px;font-size:12px;font-weight:400;color:#fff;letter-spacing:0.25px;">#3320250606154626</div>
<div class="t" style="left:602px;top:566.85px;font-size:14px;font-weight:400;color:#343a40;letter-spacing:-0.1px;">Jun 6, 2025</div>
<div class="t" style="left:764px;top:555.55px;font-size:14px;font-weight:400;color:#343a40;letter-spacing:0.15px;">Stylique Example</div>
<div class="t" style="left:764px;top:576.35px;font-size:14px;font-weight:400;color:#343a40;letter-spacing:0.12px;">9758996658</div>
<div class="t" style="left:1015px;top:566.85px;font-size:14px;font-weight:400;color:#343a40;letter-spacing:0px;">$371,0</div>
<div class="t" style="left:1148.4px;top:566.85px;font-size:14px;font-weight:400;color:#343a40;letter-spacing:0.08px;">Cash On Delivery</div>
<div class="box" style="left:1383px;top:560.50px;width:200px;height:31px;background:#e3f6fd;border-radius:4px;color:#000;font-size:14px;line-height:32.5px;text-align:center;font-weight:400;letter-spacing:0.1px;-webkit-text-stroke:0.2px #000"><svg style="width:14px;height:14px;vertical-align:-2px;margin-right:4px" viewBox="0 0 24 24" fill="none" stroke="#000" stroke-width="4.6" stroke-linecap="square"><path d="M3 12.5l6 6L21 6.5"/></svg>Pending : Jun 6, 2025</div>
<div class="box" style="left:1761px;top:560.50px;width:32px;height:31px;background:#fff3e0;border:1px solid #ffe3bd;border-radius:4px"></div>
<svg class="ic" style="left:1768.5px;top:568.5px;width:15px;height:15px;" viewBox="0 0 24 24" fill="none" stroke="#f8ac32" stroke-width="2" stroke-linecap="round" stroke-linejoin="round"><path d="M10 12a2 2 0 1 0 4 0a2 2 0 0 0 -4 0"/><path d="M21 12c-2.4 4 -5.4 6 -9 6c-3.6 0 -6.6 -2 -9 -6c2.4 -4 5.4 -6 9 -6c3.6 0 6.6 2 9 6"/></svg>
<div class="box" style="left:1797px;top:560.50px;width:32px;height:31px;background:#e4f7fd;border:1px solid #e4f7fd;border-radius:4px"></div>
<svg class="ic" style="left:1805.5px;top:568.5px;width:15px;height:15px;" viewBox="0 0 24 24" fill="none" stroke="#17b3c9" stroke-width="2" stroke-linecap="round" stroke-linejoin="round"><path d="M4 20h4l10.5 -10.5a2.828 2.828 0 1 0 -4 -4l-10.5 10.5v4"/><path d="M13.5 6.5l4 4"/></svg>
<div class="box" style="left:1833px;top:560.50px;width:32px;height:31px;background:#ffe0e6;border:1px solid #ffc9d3;border-radius:4px"></div>
<svg class="ic" style="left:1842.0px;top:569.0px;width:14px;height:14px;" viewBox="0 0 24 24" fill="none" stroke="#e0173f" stroke-width="2" stroke-linecap="round" stroke-linejoin="round"><path d="M4 7l16 0"/><path d="M10 11l0 6"/><path d="M14 11l0 6"/><path d="M5 7l1 12a2 2 0 0 0 2 2h8a2 2 0 0 0 2 -2l1 -12"/><path d="M9 7v-3a1 1 0 0 1 1 -1h4a1 1 0 0 1 1 1v3"/></svg>
<div class="box" style="left:300px;top:674.00px;width:1575px;height:1px;background:#ececee"></div>
<div class="box" style="left:325px;top:627.62px;width:136px;height:28px;background:#00ad5f;border-radius:4px"></div>
<div class="t" style="left:334px;top:631.77px;font-size:12px;font-weight:400;color:#fff;letter-spacing:0.25px;">#2920250606123937</div>
<div class="t" style="left:602px;top:632.48px;font-size:14px;font-weight:400;color:#343a40;letter-spacing:-0.1px;">Jun 6, 2025</div>
<div class="t" style="left:764px;top:621.17px;font-size:14px;font-weight:400;color:#343a40;letter-spacing:0.15px;">Hayfa Kidd</div>
<div class="t" style="left:764px;top:641.98px;font-size:14px;font-weight:400;color:#343a40;letter-spacing:0.12px;">8888758896</div>
<div class="t" style="left:1015px;top:632.48px;font-size:14px;font-weight:400;color:#343a40;letter-spacing:0px;">$84,0</div>
<div class="t" style="left:1148.4px;top:632.48px;font-size:14px;font-weight:400;color:#343a40;letter-spacing:0.08px;">Cash On Delivery</div>
<div class="box" style="left:1383px;top:626.12px;width:200px;height:31px;background:#e3f6fd;border-radius:4px;color:#000;font-size:14px;line-height:32.5px;text-align:center;font-weight:400;letter-spacing:0.1px;-webkit-text-stroke:0.2px #000"><svg style="width:14px;height:14px;vertical-align:-2px;margin-right:4px" viewBox="0 0 24 24" fill="none" stroke="#000" stroke-width="4.6" stroke-linecap="square"><path d="M3 12.5l6 6L21 6.5"/></svg>Pending : Jun 6, 2025</div>
<div class="box" style="left:1761px;top:626.12px;width:32px;height:31px;background:#fff3e0;border:1px solid #ffe3bd;border-radius:4px"></div>
<svg class="ic" style="left:1768.5px;top:634.125px;width:15px;height:15px;" viewBox="0 0 24 24" fill="none" stroke="#f8ac32" stroke-width="2" stroke-linecap="round" stroke-linejoin="round"><path d="M10 12a2 2 0 1 0 4 0a2 2 0 0 0 -4 0"/><path d="M21 12c-2.4 4 -5.4 6 -9 6c-3.6 0 -6.6 -2 -9 -6c2.4 -4 5.4 -6 9 -6c3.6 0 6.6 2 9 6"/></svg>
<div class="box" style="left:1797px;top:626.12px;width:32px;height:31px;background:#e4f7fd;border:1px solid #e4f7fd;border-radius:4px"></div>
<svg class="ic" style="left:1805.5px;top:634.125px;width:15px;height:15px;" viewBox="0 0 24 24" fill="none" stroke="#17b3c9" stroke-width="2" stroke-linecap="round" stroke-linejoin="round"><path d="M4 20h4l10.5 -10.5a2.828 2.828 0 1 0 -4 -4l-10.5 10.5v4"/><path d="M13.5 6.5l4 4"/></svg>
<div class="box" style="left:1833px;top:626.12px;width:32px;height:31px;background:#ffe0e6;border:1px solid #ffc9d3;border-radius:4px"></div>
<svg class="ic" style="left:1842.0px;top:634.625px;width:14px;height:14px;" viewBox="0 0 24 24" fill="none" stroke="#e0173f" stroke-width="2" stroke-linecap="round" stroke-linejoin="round"><path d="M4 7l16 0"/><path d="M10 11l0 6"/><path d="M14 11l0 6"/><path d="M5 7l1 12a2 2 0 0 0 2 2h8a2 2 0 0 0 2 -2l1 -12"/><path d="M9 7v-3a1 1 0 0 1 1 -1h4a1 1 0 0 1 1 1v3"/></svg>
<div class="box" style="left:300px;top:727.75px;width:1575px;height:1px;background:#ececee"></div>
<div class="box" style="left:325px;top:687.62px;width:129px;height:28px;background:#00ad5f;border-radius:4px"></div>
<div class="t" style="left:334px;top:691.77px;font-size:12px;font-weight:400;color:#fff;letter-spacing:0.25px;">#020250606123613</div>
<div class="t" style="left:602px;top:691.98px;font-size:14px;font-weight:400;color:#343a40;letter-spacing:-0.1px;">Jun 6, 2025</div>
<div class="t" style="left:764px;top:691.98px;font-size:14px;font-weight:400;color:#343a40;letter-spacing:0.1px;">Guest</div>
<div class="t" style="left:1015px;top:691.98px;font-size:14px;font-weight:400;color:#343a40;letter-spacing:0px;">$70,0</div>
<div class="t" style="left:1148.4px;top:691.98px;font-size:14px;font-weight:400;color:#343a40;letter-spacing:0.08px;">Cash On Delivery</div>
<div class="box" style="left:1383px;top:686.12px;width:200px;height:31px;background:#fff3e0;border-radius:4px;color:#f7a838;font-size:14px;line-height:32.5px;text-align:center;font-weight:400;letter-spacing:0.1px;-webkit-text-stroke:0.2px #f7a838">Confirmed : Jun 6, 2025</div>
<div class="box" style="left:1761px;top:686.12px;width:32px;height:31px;background:#fff3e0;border:1px solid #ffe3bd;border-radius:4px"></div>
<svg class="ic" style="left:1768.5px;top:694.125px;width:15px;height:15px;" viewBox="0 0 24 24" fill="none" stroke="#f8ac32" stroke-width="2" stroke-linecap="round" stroke-linejoin="round"><path d="M10 12a2 2 0 1 0 4 0a2 2 0 0 0 -4 0"/><path d="M21 12c-2.4 4 -5.4 6 -9 6c-3.6 0 -6.6 -2 -9 -6c2.4 -4 5.4 -6 9 -6c3.6 0 6.6 2 9 6"/></svg>
<div class="box" style="left:1797px;top:686.12px;width:32px;height:31px;background:#e4f7fd;border:1px solid #e4f7fd;border-radius:4px"></div>
<svg class="ic" style="left:1805.5px;top:694.125px;width:15px;height:15px;" viewBox="0 0 24 24" fill="none" stroke="#17b3c9" stroke-width="2" stroke-linecap="round" stroke-linejoin="round"><path d="M4 20h4l10.5 -10.5a2.828 2.828 0 1 0 -4 -4l-10.5 10.5v4"/><path d="M13.5 6.5l4 4"/></svg>
<div class="box" style="left:1833px;top:686.12px;width:32px;height:31px;background:#ffe0e6;border:1px solid #ffc9d3;border-radius:4px"></div>
<svg class="ic" style="left:1842.0px;top:694.625px;width:14px;height:14px;" viewBox="0 0 24 24" fill="none" stroke="#e0173f" stroke-width="2" stroke-linecap="round" stroke-linejoin="round"><path d="M4 7l16 0"/><path d="M10 11l0 6"/><path d="M14 11l0 6"/><path d="M5 7l1 12a2 2 0 0 0 2 2h8a2 2 0 0 0 2 -2l1 -12"/><path d="M9 7v-3a1 1 0 0 1 1 -1h4a1 1 0 0 1 1 1v3"/></svg>
<div class="box" style="left:300px;top:782.75px;width:1575px;height:1px;background:#ececee"></div>
<div class="box" style="left:325px;top:742.00px;width:129px;height:28px;background:#00ad5f;border-radius:4px"></div>
<div class="t" style="left:334px;top:746.15px;font-size:12px;font-weight:400;color:#fff;letter-spacing:0.25px;">#020250606122637</div>
<div class="t" style="left:602px;top:746.35px;font-size:14px;font-weight:400;color:#343a40;letter-spacing:-0.1px;">Jun 6, 2025</div>
<div class="t" style="left:764px;top:746.35px;font-size:14px;font-weight:400;color:#343a40;letter-spacing:0.1px;">Guest</div>
<div class="t" style="left:1015px;top:746.35px;font-size:14px;font-weight:400;color:#343a40;letter-spacing:0px;">$55,0</div>
<div class="t" style="left:1148.4px;top:746.35px;font-size:14px;font-weight:400;color:#343a40;letter-spacing:0.08px;">Cash On Delivery</div>
<div class="box" style="left:1383px;top:740.50px;width:200px;height:31px;background:#e3f6fd;border-radius:4px;color:#000;font-size:14px;line-height:32.5px;text-align:center;font-weight:400;letter-spacing:0.1px;-webkit-text-stroke:0.2px #000"><svg style="width:14px;height:14px;vertical-align:-2px;margin-right:4px" viewBox="0 0 24 24" fill="none" stroke="#000" stroke-width="4.6" stroke-linecap="square"><path d="M3 12.5l6 6L21 6.5"/></svg>Pending : Jun 6, 2025</div>
<div class="box" style="left:1761px;top:740.50px;width:32px;height:31px;background:#fff3e0;border:1px solid #ffe3bd;border-radius:4px"></div>
<svg class="ic" style="left:1768.5px;top:748.5px;width:15px;height:15px;" viewBox="0 0 24 24" fill="none" stroke="#f8ac32" stroke-width="2" stroke-linecap="round" stroke-linejoin="round"><path d="M10 12a2 2 0 1 0 4 0a2 2 0 0 0 -4 0"/><path d="M21 12c-2.4 4 -5.4 6 -9 6c-3.6 0 -6.6 -2 -9 -6c2.4 -4 5.4 -6 9 -6c3.6 0 6.6 2 9 6"/></svg>
<div class="box" style="left:1797px;top:740.50px;width:32px;height:31px;background:#e4f7fd;border:1px solid #e4f7fd;border-radius:4px"></div>
<svg class="ic" style="left:1805.5px;top:748.5px;width:15px;height:15px;" viewBox="0 0 24 24" fill="none" stroke="#17b3c9" stroke-width="2" stroke-linecap="round" stroke-linejoin="round"><path d="M4 20h4l10.5 -10.5a2.828 2.828 0 1 0 -4 -4l-10.5 10.5v4"/><path d="M13.5 6.5l4 4"/></svg>
<div class="box" style="left:1833px;top:740.50px;width:32px;height:31px;background:#ffe0e6;border:1px solid #ffc9d3;border-radius:4px"></div>
<svg class="ic" style="left:1842.0px;top:749.0px;width:14px;height:14px;" viewBox="0 0 24 24" fill="none" stroke="#e0173f" stroke-width="2" stroke-linecap="round" stroke-linejoin="round"><path d="M4 7l16 0"/><path d="M10 11l0 6"/><path d="M14 11l0 6"/><path d="M5 7l1 12a2 2 0 0 0 2 2h8a2 2 0 0 0 2 -2l1 -12"/><path d="M9 7v-3a1 1 0 0 1 1 -1h4a1 1 0 0 1 1 1v3"/></svg>
<div class="box" style="left:300px;top:847.75px;width:1575px;height:1px;background:#ececee"></div>
<div class="box" style="left:325px;top:802.00px;width:136px;height:28px;background:#00ad5f;border-radius:4px"></div>
<div class="t" style="left:334px;top:806.15px;font-size:12px;font-weight:400;color:#fff;letter-spacing:0.25px;">#2520250606120046</div>
<div class="t" style="left:602px;top:806.85px;font-size:14px;font-weight:400;color:#343a40;letter-spacing:-0.1px;">Jun 6, 2025</div>
<div class="t" style="left:764px;top:795.55px;font-size:14px;font-weight:400;color:#343a40;letter-spacing:0.15px;">Shubham Ghori</div>
<div class="t" style="left:764px;top:816.35px;font-size:14px;font-weight:400;color:#343a40;letter-spacing:0.12px;">9875589998</div>
<div class="t" style="left:1015px;top:806.85px;font-size:14px;font-weight:400;color:#343a40;letter-spacing:0px;">$220,0</div>
<div class="t" style="left:1148.4px;top:806.85px;font-size:14px;font-weight:400;color:#343a40;letter-spacing:0.08px;">Cash On Delivery</div>
<div class="box" style="left:1383px;top:800.50px;width:200px;height:31px;background:#dcdddf;border-radius:4px;color:#2f3337;font-size:14px;line-height:32.5px;text-align:center;font-weight:400;letter-spacing:0.1px;-webkit-text-stroke:0.2px #2f3337">Shipped : Jun 6, 2025</div>
<div class="box" style="left:1761px;top:800.50px;width:32px;height:31px;background:#fff3e0;border:1px solid #ffe3bd;border-radius:4px"></div>
<svg class="ic" style="left:1768.5px;top:808.5px;width:15px;height:15px;" viewBox="0 0 24 24" fill="none" stroke="#f8ac32" stroke-width="2" stroke-linecap="round" stroke-linejoin="round"><path d="M10 12a2 2 0 1 0 4 0a2 2 0 0 0 -4 0"/><path d="M21 12c-2.4 4 -5.4 6 -9 6c-3.6 0 -6.6 -2 -9 -6c2.4 -4 5.4 -6 9 -6c3.6 0 6.6 2 9 6"/></svg>
<div class="box" style="left:1797px;top:800.50px;width:32px;height:31px;background:#e4f7fd;border:1px solid #e4f7fd;border-radius:4px"></div>
<svg class="ic" style="left:1805.5px;top:808.5px;width:15px;height:15px;" viewBox="0 0 24 24" fill="none" stroke="#17b3c9" stroke-width="2" stroke-linecap="round" stroke-linejoin="round"><path d="M4 20h4l10.5 -10.5a2.828 2.828 0 1 0 -4 -4l-10.5 10.5v4"/><path d="M13.5 6.5l4 4"/></svg>
<div class="box" style="left:1833px;top:800.50px;width:32px;height:31px;background:#ffe0e6;border:1px solid #ffc9d3;border-radius:4px"></div>
<svg class="ic" style="left:1842.0px;top:809.0px;width:14px;height:14px;" viewBox="0 0 24 24" fill="none" stroke="#e0173f" stroke-width="2" stroke-linecap="round" stroke-linejoin="round"><path d="M4 7l16 0"/><path d="M10 11l0 6"/><path d="M14 11l0 6"/><path d="M5 7l1 12a2 2 0 0 0 2 2h8a2 2 0 0 0 2 -2l1 -12"/><path d="M9 7v-3a1 1 0 0 1 1 -1h4a1 1 0 0 1 1 1v3"/></svg>
<div class="box" style="left:300px;top:912.75px;width:1575px;height:1px;background:#ececee"></div>
<div class="box" style="left:325px;top:867.00px;width:136px;height:28px;background:#00ad5f;border-radius:4px"></div>
<div class="t" style="left:334px;top:871.15px;font-size:12px;font-weight:400;color:#fff;letter-spacing:0.25px;">#2520250606115839</div>
<div class="t" style="left:602px;top:871.85px;font-size:14px;font-weight:400;color:#343a40;letter-spacing:-0.1px;">Jun 6, 2025</div>
<div class="t" style="left:764px;top:860.55px;font-size:14px;font-weight:400;color:#343a40;letter-spacing:0.15px;">Shubham Ghori</div>
<div class="t" style="left:764px;top:881.35px;font-size:14px;font-weight:400;color:#343a40;letter-spacing:0.12px;">9875589998</div>
<div class="t" style="left:1015px;top:871.85px;font-size:14px;font-weight:400;color:#343a40;letter-spacing:0px;">$1,180,0</div>
<div class="t" style="left:1148.4px;top:871.85px;font-size:14px;font-weight:400;color:#343a40;letter-spacing:0.08px;">Cash On Delivery</div>
<div class="box" style="left:1383px;top:865.50px;width:200px;height:31px;background:#ffdde3;border-radius:4px;color:#e11d48;font-size:14px;line-height:32.5px;text-align:center;font-weight:400;letter-spacing:0.1px;-webkit-text-stroke:0.2px #e11d48">Cancel : Jun 6, 2025</div>
<div class="box" style="left:1761px;top:865.50px;width:32px;height:31px;background:#fff3e0;border:1px solid #ffe3bd;border-radius:4px"></div>
<svg class="ic" style="left:1768.5px;top:873.5px;width:15px;height:15px;" viewBox="0 0 24 24" fill="none" stroke="#f8ac32" stroke-width="2" stroke-linecap="round" stroke-linejoin="round"><path d="M10 12a2 2 0 1 0 4 0a2 2 0 0 0 -4 0"/><path d="M21 12c-2.4 4 -5.4 6 -9 6c-3.6 0 -6.6 -2 -9 -6c2.4 -4 5.4 -6 9 -6c3.6 0 6.6 2 9 6"/></svg>
<div class="box" style="left:1797px;top:865.50px;width:32px;height:31px;background:#e4f7fd;border:1px solid #e4f7fd;border-radius:4px"></div>
<svg class="ic" style="left:1805.5px;top:873.5px;width:15px;height:15px;" viewBox="0 0 24 24" fill="none" stroke="#17b3c9" stroke-width="2" stroke-linecap="round" stroke-linejoin="round"><path d="M4 20h4l10.5 -10.5a2.828 2.828 0 1 0 -4 -4l-10.5 10.5v4"/><path d="M13.5 6.5l4 4"/></svg>
<div class="box" style="left:1833px;top:865.50px;width:32px;height:31px;background:#ffe0e6;border:1px solid #ffc9d3;border-radius:4px"></div>
<svg class="ic" style="left:1842.0px;top:874.0px;width:14px;height:14px;" viewBox="0 0 24 24" fill="none" stroke="#e0173f" stroke-width="2" stroke-linecap="round" stroke-linejoin="round"><path d="M4 7l16 0"/><path d="M10 11l0 6"/><path d="M14 11l0 6"/><path d="M5 7l1 12a2 2 0 0 0 2 2h8a2 2 0 0 0 2 -2l1 -12"/><path d="M9 7v-3a1 1 0 0 1 1 -1h4a1 1 0 0 1 1 1v3"/></svg>
<div class="box" style="left:300px;top:967.75px;width:1575px;height:1px;background:#ececee"></div>
<div class="box" style="left:325px;top:927.00px;width:129px;height:28px;background:#00ad5f;border-radius:4px"></div>
<div class="t" style="left:334px;top:931.15px;font-size:12px;font-weight:400;color:#fff;letter-spacing:0.25px;">#020250606115641</div>
<div class="t" style="left:602px;top:931.35px;font-size:14px;font-weight:400;color:#343a40;letter-spacing:-0.1px;">Jun 6, 2025</div>
<div class="t" style="left:764px;top:931.35px;font-size:14px;font-weight:400;color:#343a40;letter-spacing:0.1px;">Guest</div>
<div class="t" style="left:1015px;top:931.35px;font-size:14px;font-weight:400;color:#343a40;letter-spacing:0px;">$140,0</div>
<div class="t" style="left:1148.4px;top:931.35px;font-size:14px;font-weight:400;color:#343a40;letter-spacing:0.08px;">Cash On Delivery</div>
<div class="box" style="left:1383px;top:925.50px;width:200px;height:31px;background:#00ad5f;border-radius:4px;color:#fff;font-size:14px;line-height:32.5px;text-align:center;font-weight:400;letter-spacing:0.1px;-webkit-text-stroke:0.2px #fff">Delivered : Jun 6, 2025</div>
<div class="box" style="left:1761px;top:925.50px;width:32px;height:31px;background:#fff3e0;border:1px solid #ffe3bd;border-radius:4px"></div>
<svg class="ic" style="left:1768.5px;top:933.5px;width:15px;height:15px;" viewBox="0 0 24 24" fill="none" stroke="#f8ac32" stroke-width="2" stroke-linecap="round" stroke-linejoin="round"><path d="M10 12a2 2 0 1 0 4 0a2 2 0 0 0 -4 0"/><path d="M21 12c-2.4 4 -5.4 6 -9 6c-3.6 0 -6.6 -2 -9 -6c2.4 -4 5.4 -6 9 -6c3.6 0 6.6 2 9 6"/></svg>
<div class="box" style="left:1797px;top:925.50px;width:32px;height:31px;background:#e4f7fd;border:1px solid #e4f7fd;border-radius:4px"></div>
<svg class="ic" style="left:1805.5px;top:933.5px;width:15px;height:15px;" viewBox="0 0 24 24" fill="none" stroke="#17b3c9" stroke-width="2" stroke-linecap="round" stroke-linejoin="round"><path d="M4 20h4l10.5 -10.5a2.828 2.828 0 1 0 -4 -4l-10.5 10.5v4"/><path d="M13.5 6.5l4 4"/></svg>
<div class="box" style="left:1833px;top:925.50px;width:32px;height:31px;background:#ffe0e6;border:1px solid #ffc9d3;border-radius:4px"></div>
<svg class="ic" style="left:1842.0px;top:934.0px;width:14px;height:14px;" viewBox="0 0 24 24" fill="none" stroke="#e0173f" stroke-width="2" stroke-linecap="round" stroke-linejoin="round"><path d="M4 7l16 0"/><path d="M10 11l0 6"/><path d="M14 11l0 6"/><path d="M5 7l1 12a2 2 0 0 0 2 2h8a2 2 0 0 0 2 -2l1 -12"/><path d="M9 7v-3a1 1 0 0 1 1 -1h4a1 1 0 0 1 1 1v3"/></svg>
<div class="t" style="left:300px;top:1013.05px;font-size:14px;font-weight:400;color:#3a3f45;letter-spacing:0.25px;">Showing 1 to 10 of 15 entries</div>
<div class="box" style="left:1720px;top:1002px;width:35px;height:35px;background:#fff;border:1px solid #dee2e6;border-radius:4px;color:#222;font-size:15px;line-height:33px;text-align:center"></div>
<svg class="ic" style="left:1731px;top:1013px;width:13px;height:13px;" viewBox="0 0 24 24" fill="none" stroke="#5f6b7a" stroke-width="1.7" stroke-linecap="round" stroke-linejoin="round"><path d="M15 6l-6 6l6 6"/></svg>
<div class="box" style="left:1760px;top:1002px;width:35px;height:35px;background:#00ad5f;border:1px solid #00ad5f;border-radius:4px;color:#fff;font-size:15px;line-height:33px;text-align:center"></div>
<div class="t" style="left:1773px;top:1009.65px;font-size:15px;font-weight:400;color:#fff;letter-spacing:0px;">1</div>
<div class="box" style="left:1800px;top:1002px;width:35px;height:35px;background:#fff;border:1px solid #dee2e6;border-radius:4px;color:#222;font-size:15px;line-height:33px;text-align:center"></div>
<div class="t" style="left:1813px;top:1009.65px;font-size:15px;font-weight:400;color:#222;letter-spacing:0px;">2</div>
<div class="box" style="left:1840px;top:1002px;width:35px;height:35px;background:#fff;border:1px solid #dee2e6;border-radius:4px;color:#222;font-size:15px;line-height:33px;text-align:center"></div>
<svg class="ic" style="left:1851px;top:1013px;width:13px;height:13px;" viewBox="0 0 24 24" fill="none" stroke="#111" stroke-width="2.3" stroke-linecap="round" stroke-linejoin="round"><path d="M9 6l6 6l-6 6"/></svg>
</body></html>
